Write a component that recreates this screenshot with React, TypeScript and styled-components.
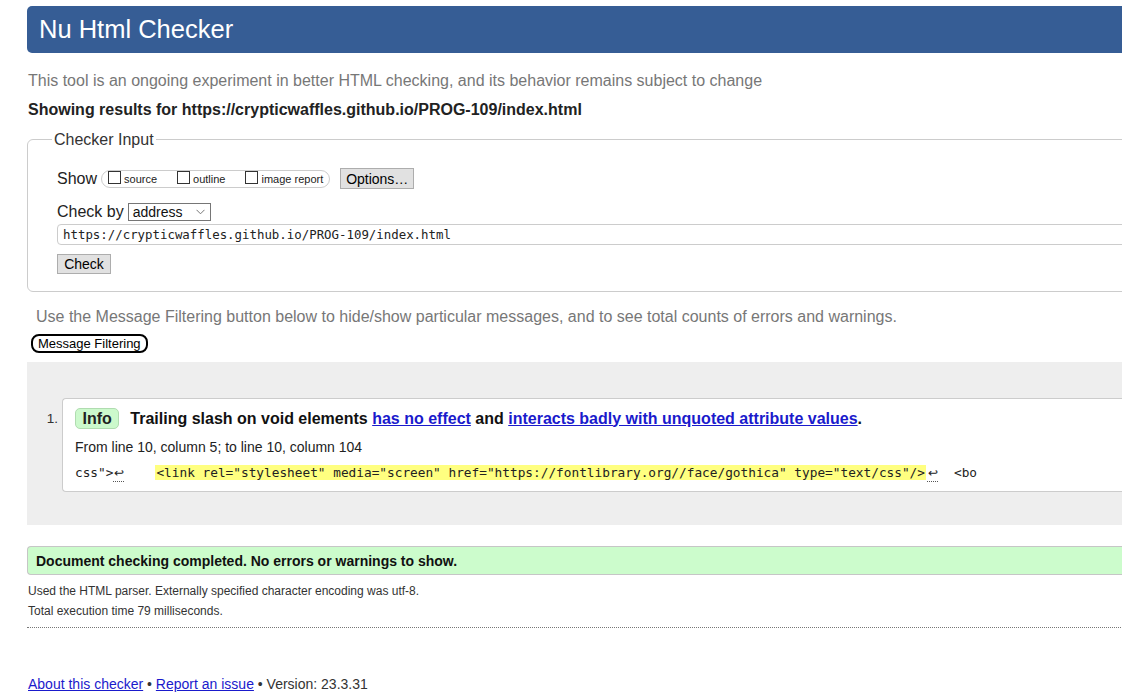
import React from "react";
import styled, { createGlobalStyle } from "styled-components";

const GlobalStyle = createGlobalStyle`
  html, body { margin: 0; padding: 0; background: #fff; overflow: hidden; }
  body { font-family: "Liberation Sans", Arial, sans-serif; color: #222; }
  #root { width: 1122px; height: 699px; overflow: hidden; }
  * { box-sizing: border-box; }
`;

const Page = styled.main`
  margin-left: 27px;
  width: 1110px;
  padding-top: 6px;
`;

const Header = styled.header`
  height: 47px;
  background: #365d95;
  border-radius: 5px 0 0 5px;
  display: flex;
  align-items: center;
  padding-left: 12px;
`;

const Title = styled.h1`
  margin: 0;
  font-size: 25.5px;
  font-weight: normal;
  color: #fff;
  line-height: 1;
`;

const Intro = styled.p`
  margin: 18px 0 0 1px;
  font-size: 16px;
  line-height: 19px;
  color: #777;
`;

const Showing = styled.p`
  margin: 10px 0 0 1px;
  font-size: 16px;
  line-height: 19px;
  font-weight: bold;
  color: #222;
`;

const InputFieldset = styled.fieldset`
  margin: 11px 0 0;
  padding: 19px 0 17px 29px;
  border: 1px solid #ccc;
  border-radius: 6px 0 0 6px;
  min-width: 0;
`;

const Legend = styled.legend`
  padding: 0 2px;
  margin-left: -5px;
  font-size: 16px;
  line-height: 19px;
  color: #333;
`;

const Row = styled.div<{ $h: number; $mt?: number }>`
  display: flex;
  align-items: center;
  height: ${(p) => p.$h}px;
  margin-top: ${(p) => p.$mt ?? 0}px;
`;

const RowLabel = styled.span`
  font-size: 16px;
  line-height: 19px;
  color: #222;
  margin-right: 4px;
`;

const Pill = styled.div`
  display: flex;
  align-items: center;
  gap: 20px;
  height: 18px;
  padding: 0 6px;
  border: 1px solid #ccc;
  border-radius: 9px;
`;

const CheckLabel = styled.label`
  display: flex;
  align-items: center;
  font-size: 11px;
  color: #222;
`;

const Box = styled.input`
  appearance: none;
  -webkit-appearance: none;
  width: 13px;
  height: 13px;
  margin: 0 3px 2px 0;
  border: 1px solid #333;
  background: #fff;
  border-radius: 0;
`;

const GrayButton = styled.button<{ $w: number; $h: number }>`
  display: block;
  width: ${(p) => p.$w}px;
  height: ${(p) => p.$h}px;
  padding: 0;
  font-family: "Liberation Sans", Arial, sans-serif;
  font-size: 14px;
  color: #000;
  background: #e1e1e1;
  border: 1px solid #adadad;
  border-radius: 0;
`;

const OptionsButton = styled(GrayButton)`
  margin-left: 10px;
`;

const CheckButton = styled(GrayButton)`
  margin-top: 9px;
`;

const Select = styled.div`
  display: flex;
  align-items: center;
  justify-content: space-between;
  width: 83px;
  height: 18px;
  padding: 0 5px 0 4px;
  border: 1px solid #767676;
  font-size: 14px;
  color: #111;
`;

const UrlInput = styled.input`
  display: block;
  width: 100%;
  height: 21px;
  margin-top: 3px;
  padding: 0 5px;
  border: 1px solid #ccc;
  border-radius: 4px 0 0 4px;
  font-family: "DejaVu Sans Mono", "Liberation Mono", monospace;
  font-size: 12.4px;
  color: #222;
  outline: none;
`;

const FilterNote = styled.p`
  margin: 15px 0 0 9px;
  font-size: 16px;
  line-height: 19px;
  color: #777;
`;

const FilterButton = styled.button`
  display: block;
  margin: 8px 0 0 4px;
  height: 19px;
  padding: 0 5px;
  border: 2px solid #000;
  border-radius: 8px;
  background: #fff;
  font-family: "Liberation Sans", Arial, sans-serif;
  font-size: 13px;
  line-height: 15px;
  color: #000;
`;

const Results = styled.ol`
  list-style: none;
  margin: 9px 0 0;
  padding: 36px 0 33px;
  background: #eee;
`;

const Item = styled.li`
  display: flex;
`;

const Num = styled.span`
  width: 35px;
  padding: 13px 4px 0 0;
  text-align: right;
  font-size: 13.5px;
  line-height: 15px;
  color: #333;
`;

const Card = styled.div`
  flex: 1;
  background: #fff;
  border: 1px solid #ccc;
  border-right: none;
  border-radius: 4px 0 0 4px;
  padding: 9px 0 9px 12px;
`;

const MsgHead = styled.p`
  display: flex;
  align-items: center;
  height: 21px;
  margin: 0;
  font-size: 16px;
  font-weight: bold;
  color: #111;
  white-space: pre;
`;

const Badge = styled.span`
  display: inline-flex;
  align-items: center;
  height: 21px;
  padding: 0 6.5px;
  margin-right: 11px;
  background: #ccf9cc;
  border: 1px solid #b0dcb0;
  border-radius: 5px;
  color: #222;
`;

const Link = styled.a`
  color: #1a1acc;
  text-decoration: underline;
`;

const Location = styled.p`
  margin: 10px 0 0;
  font-size: 14px;
  line-height: 17px;
  color: #222;
`;

const Extract = styled.p`
  margin: 8px 0 0;
  font-family: "DejaVu Sans Mono", "Liberation Mono", monospace;
  font-size: 12.77px;
  line-height: 17px;
  color: #222;
  white-space: pre;
`;

const Ret = styled.span<{ $ml?: number }>`
  display: inline-block;
  width: 11px;
  margin-left: ${(p) => p.$ml ?? 0}px;
  font-family: "Liberation Sans", Arial, sans-serif;
  font-size: 12px;
  line-height: 15px;
  text-align: center;
  border-bottom: 1px dotted #555;
`;

const Mark = styled.mark<{ $ml: number }>`
  margin-left: ${(p) => p.$ml}px;
  padding: 0 1px;
  background: #ffff80;
  color: #222;
`;

const After = styled.span`
  margin-left: 16px;
`;

const Success = styled.p`
  display: flex;
  align-items: center;
  height: 29px;
  margin: 21px 0 0;
  padding-left: 8px;
  background: #ccfccc;
  border: 1px solid #c6c6c6;
  border-right: none;
  border-radius: 4px 0 0 4px;
  font-size: 14px;
  font-weight: bold;
  color: #111;
`;

const Detail = styled.p<{ $mt: number }>`
  margin: ${(p) => p.$mt}px 0 0 1px;
  font-size: 12px;
  line-height: 14px;
  color: #333;
`;

const Rule = styled.hr`
  margin: 9px 0 0;
  height: 0;
  border: none;
  border-top: 1px dotted #777;
`;

const Footer = styled.footer`
  margin: 48px 0 0 1px;
  font-size: 14px;
  line-height: 17px;
  color: #333;
`;

export default function App() {
  return (
    <>
      <GlobalStyle />
      <Page>
        <Header>
          <Title>Nu Html Checker</Title>
        </Header>
        <Intro>
          This tool is an ongoing experiment in better HTML checking, and its behavior remains subject to change
        </Intro>
        <Showing>Showing results for https://crypticwaffles.github.io/PROG-109/index.html</Showing>

        <InputFieldset>
          <Legend>Checker Input</Legend>
          <Row $h={21}>
            <RowLabel>Show</RowLabel>
            <Pill>
              <CheckLabel>
                <Box type="checkbox" />
                source
              </CheckLabel>
              <CheckLabel>
                <Box type="checkbox" />
                outline
              </CheckLabel>
              <CheckLabel>
                <Box type="checkbox" />
                image report
              </CheckLabel>
            </Pill>
            <OptionsButton $w={74} $h={21}>Options…</OptionsButton>
          </Row>
          <Row $h={19} $mt={13}>
            <RowLabel>Check by</RowLabel>
            <Select role="combobox">
              <span>address</span>
              <svg width="9" height="6" viewBox="0 0 9 6">
                <path d="M0.5 0.8 L4.5 4.8 L8.5 0.8" fill="none" stroke="#777" strokeWidth="1" />
              </svg>
            </Select>
          </Row>
          <UrlInput readOnly defaultValue="https://crypticwaffles.github.io/PROG-109/index.html" />
          <CheckButton $w={54} $h={20}>Check</CheckButton>
        </InputFieldset>

        <FilterNote>
          Use the Message Filtering button below to hide/show particular messages, and to see total counts of errors and warnings.
        </FilterNote>
        <FilterButton>Message Filtering</FilterButton>

        <Results>
          <Item>
            <Num>1.</Num>
            <Card>
              <MsgHead>
                <Badge>Info</Badge>
                Trailing slash on void elements <Link href="#">has no effect</Link> and{" "}
                <Link href="#">interacts badly with unquoted attribute values</Link>.
              </MsgHead>
              <Location>From line 10, column 5; to line 10, column 104</Location>
              <Extract>
                css"&gt;<Ret>↩</Ret>
                <Mark $ml={31}>
                  &lt;link rel="stylesheet" media="screen" href="https://fontlibrary.org//face/gothica" type="text/css"/&gt;
                </Mark>
                <Ret $ml={1}>↩</Ret>
                <After>&lt;bo</After>
              </Extract>
            </Card>
          </Item>
        </Results>

        <Success>Document checking completed. No errors or warnings to show.</Success>
        <Detail $mt={9}>Used the HTML parser. Externally specified character encoding was utf-8.</Detail>
        <Detail $mt={6}>Total execution time 79 milliseconds.</Detail>
        <Rule />
        <Footer>
          <Link href="#">About this checker</Link> • <Link href="#">Report an issue</Link> • Version: 23.3.31
        </Footer>
      </Page>
    </>
  );
}
